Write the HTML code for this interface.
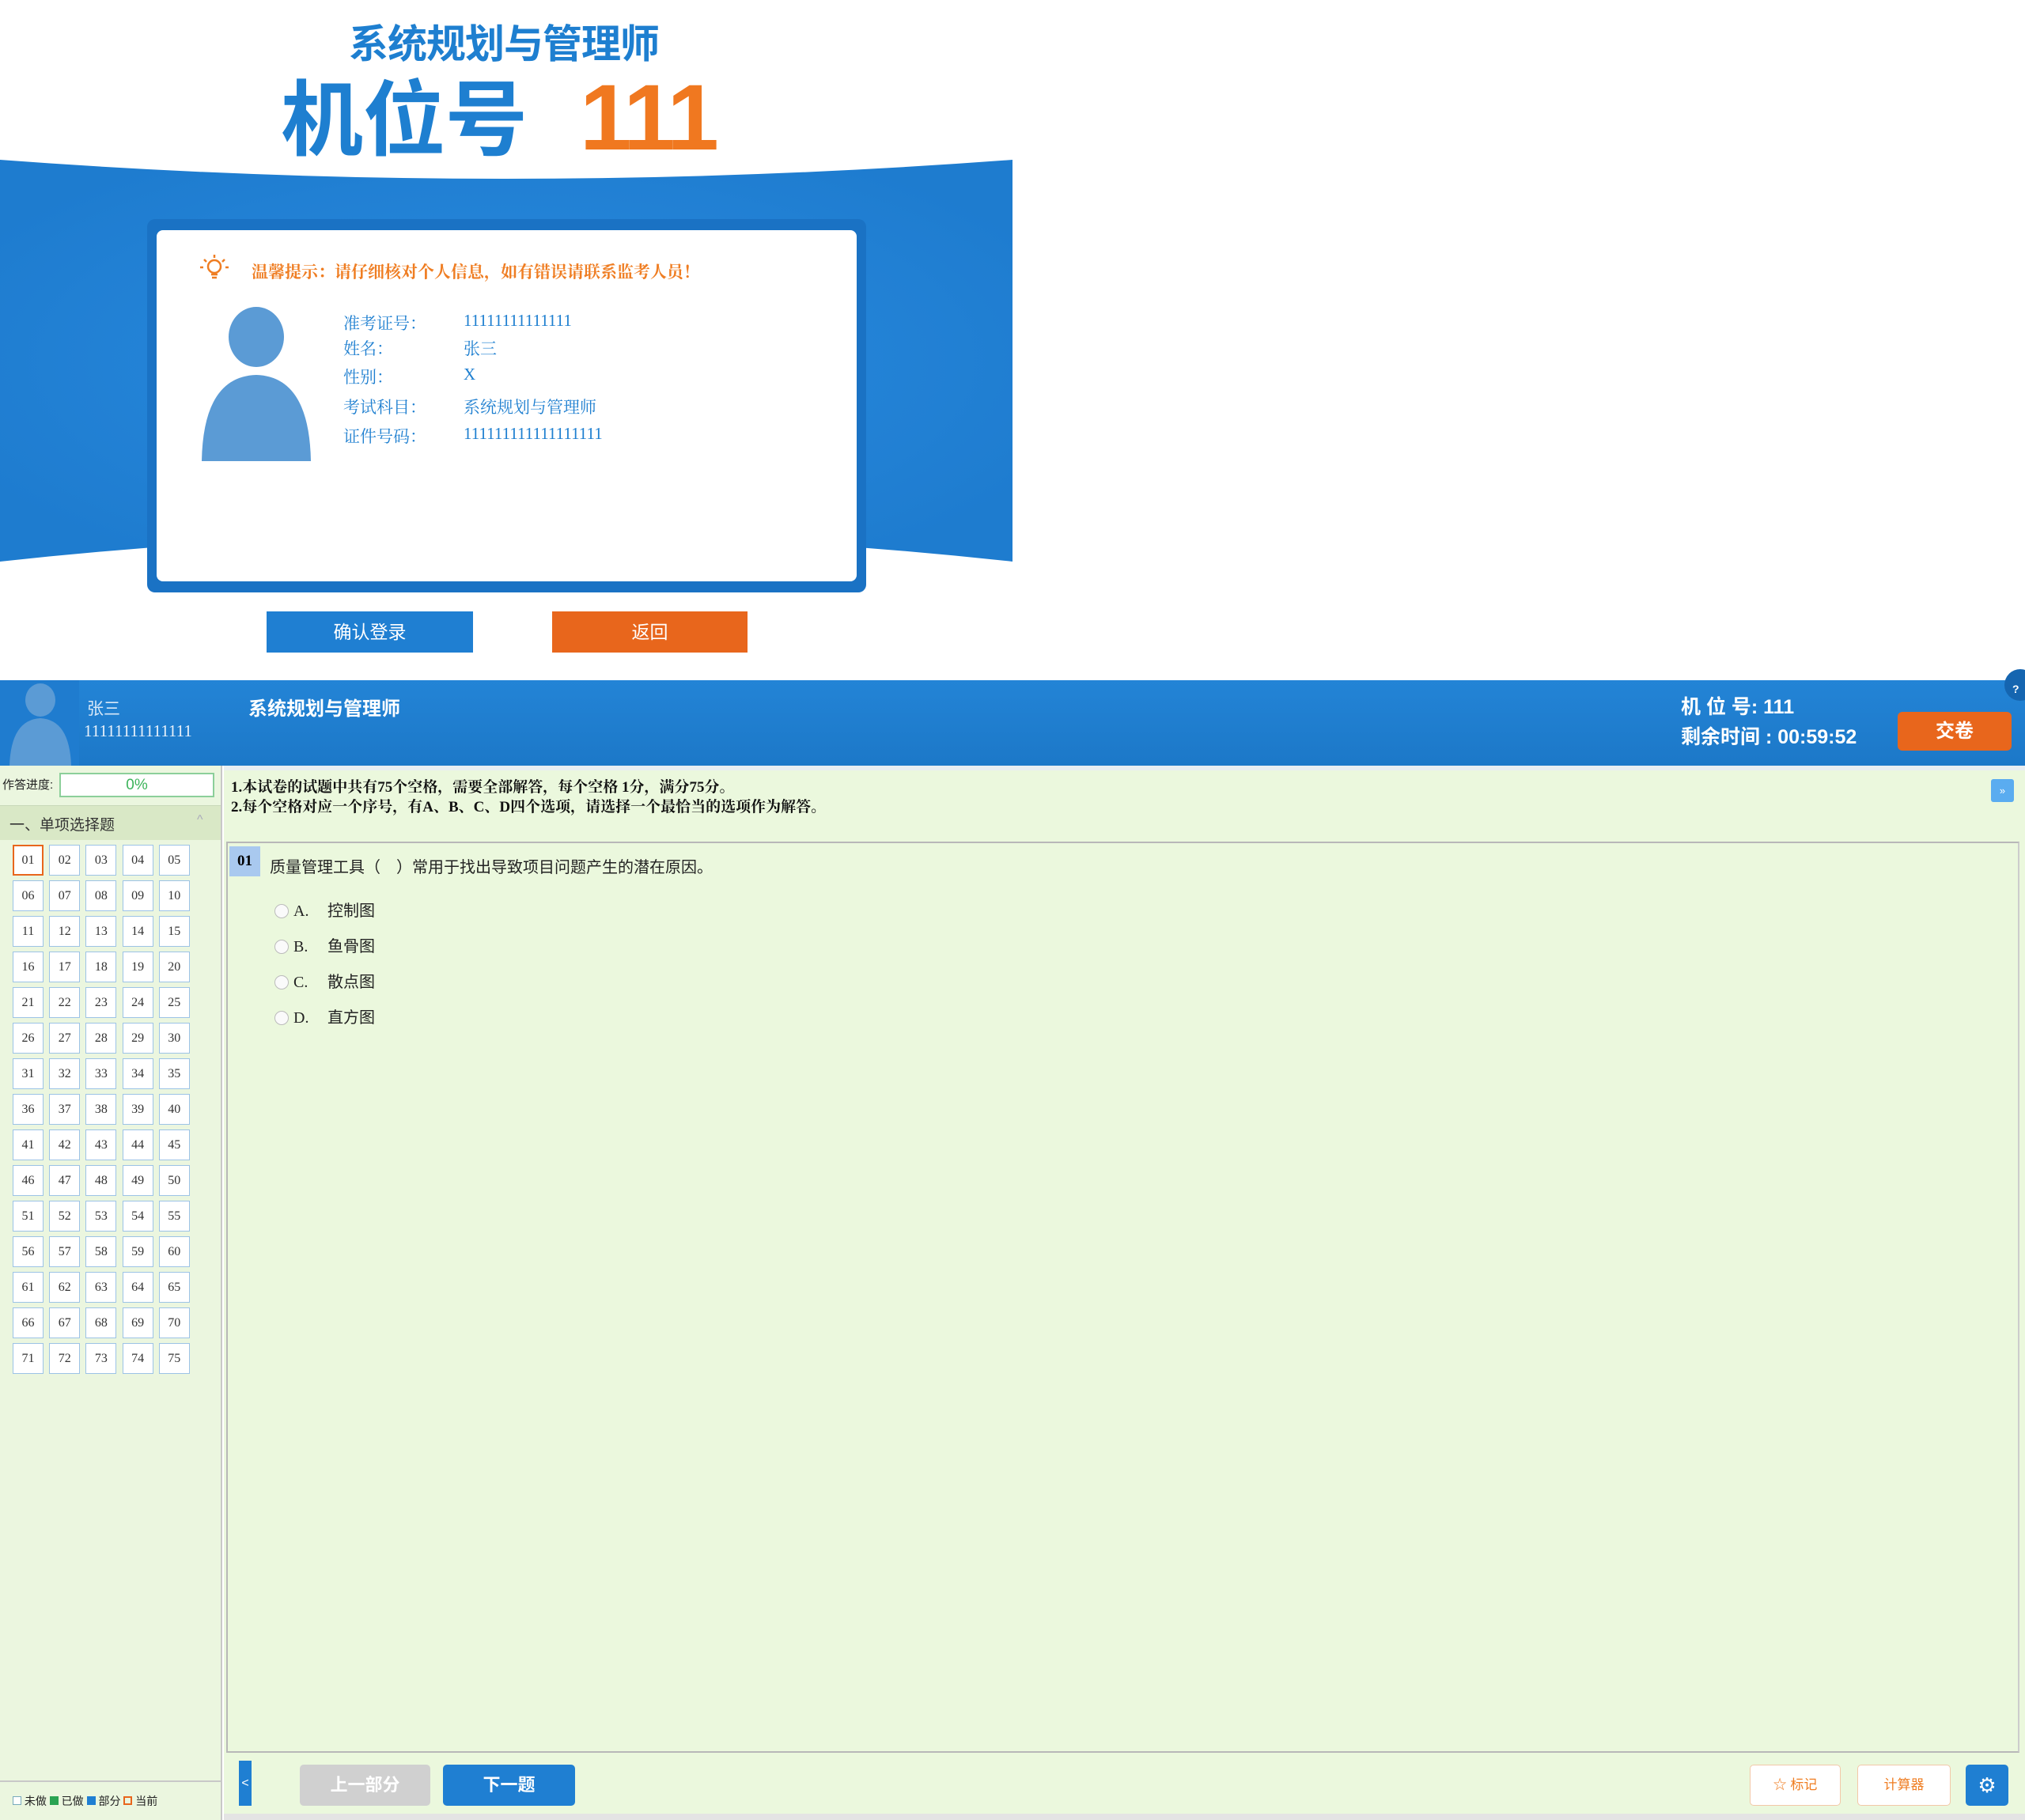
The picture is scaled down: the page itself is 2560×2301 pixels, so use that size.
<!DOCTYPE html>
<html><head><meta charset="utf-8">
<style>
*{margin:0;padding:0;box-sizing:border-box}
body{width:2560px;height:2301px;position:relative;background:#fff;overflow:hidden;font-family:"Liberation Sans","Noto Sans CJK SC",sans-serif}
.a{position:absolute}
.ser{font-family:"Liberation Serif","Noto Serif CJK SC",serif}
.lab{position:absolute;left:434px;font-size:21px;color:#1e7fd0}
.val{position:absolute;left:586px;font-size:21px;color:#1e7fd0}
#grid{position:absolute;left:16px;top:1068px;display:grid;grid-template-columns:repeat(5,39px);column-gap:7.2px;row-gap:6px}
#grid div{width:39px;height:39px;border:1px solid #9cc3e6;background:#fff;font-family:"Liberation Serif",serif;font-size:16px;color:#333;text-align:center;line-height:37px}
#grid div.cur{border:2px solid #e8661c;line-height:35px}
.opt{position:absolute;left:347px;font-size:20px;color:#222;height:24px;line-height:24px}
.opt i{position:absolute;left:0;top:3px;width:18px;height:18px;border:1px solid #bbb;border-radius:50%;background:#fafafa}
.opt b{position:absolute;left:24px;font-weight:normal;font-family:"Liberation Serif",serif}
.opt span{position:absolute;left:67px;white-space:nowrap}
</style></head><body>
<svg class="a" style="left:0;top:0" width="1280" height="760">
<defs><radialGradient id="g" cx="0.5" cy="0.5" r="0.6"><stop offset="0" stop-color="#2a8be0"/><stop offset="1" stop-color="#1e7ccf"/></radialGradient></defs>
<path d="M0 202 Q640 250 1280 202 L1280 710 Q640 640 0 710 Z" fill="url(#g)"/>
<rect x="186" y="277" width="909" height="472" rx="10" fill="#1a72c4"/>
<rect x="198" y="291" width="885" height="444" rx="8" fill="#fff"/>
</svg>
<div class="a" style="left:441px;top:16px;width:400px;font-size:50px;font-weight:bold;color:#1e7fd0;white-space:nowrap;letter-spacing:-1px">系统规划与管理师</div>
<div class="a" style="left:355px;top:88px;font-size:104px;font-weight:bold;color:#1e7fd0;white-space:nowrap;line-height:130px">机位号</div>
<div class="a" style="left:733px;top:84px;font-size:118px;font-weight:bold;color:#f07820;line-height:130px;letter-spacing:-4px;font-family:'Liberation Sans',sans-serif">111</div>
<svg class="a" style="left:250px;top:320px" width="42" height="40" viewBox="0 0 42 40"><g stroke="#ef7d22" stroke-width="2.5" fill="none"><circle cx="21" cy="17" r="8"/><path d="M17 27h8M18 31h6M21 2v4M8 8l3 3M34 8l-3 3M3 18h4M35 18h4"/></g></svg>
<div class="a ser" style="left:318px;top:328px;font-size:21px;color:#ef7d22;font-weight:bold;white-space:nowrap">温馨提示：请仔细核对个人信息，如有错误请联系监考人员！</div>
<svg class="a" style="left:253px;top:386px" width="142" height="200"><ellipse cx="71" cy="40" rx="35" ry="38" fill="#5b9bd5"/><path d="M2 197 Q4 90 71 88 Q138 90 140 197 Z" fill="#5b9bd5"/></svg>
<div class="lab ser" style="top:393px">准考证号：</div><div class="val ser" style="top:393px">11111111111111</div>
<div class="lab ser" style="top:425px">姓名：</div><div class="val ser" style="top:425px">张三</div>
<div class="lab ser" style="top:461px">性别：</div><div class="val ser" style="top:461px">X</div>
<div class="lab ser" style="top:499px">考试科目：</div><div class="val ser" style="top:499px">系统规划与管理师</div>
<div class="lab ser" style="top:536px">证件号码：</div><div class="val ser" style="top:536px">111111111111111111</div>
<div class="a" style="left:337px;top:773px;width:261px;height:52px;background:#1f7fd2;color:#fff;font-size:23px;text-align:center;line-height:52px">确认登录</div>
<div class="a" style="left:698px;top:773px;width:247px;height:52px;background:#e8661c;color:#fff;font-size:23px;text-align:center;line-height:52px">返回</div>

<div class="a" style="left:0;top:860px;width:2560px;height:108px;background:linear-gradient(#2384d6,#1c78c8)"></div>
<div class="a" style="left:0;top:860px;width:100px;height:108px;background:#1f7ccf"></div>
<svg class="a" style="left:8px;top:864px" width="86" height="104"><ellipse cx="43" cy="21" rx="19" ry="21" fill="#5b9bd5"/><path d="M4 104 Q6 46 43 44 Q80 46 82 104 Z" fill="#5b9bd5"/></svg>
<div class="a" style="left:110px;top:880px;font-size:21px;color:#d7e8f8">张三</div>
<div class="a ser" style="left:106px;top:912px;font-size:21px;color:#e6f0fa">11111111111111</div>
<div class="a" style="left:314px;top:876px;font-size:24px;font-weight:bold;color:#fff;white-space:nowrap">系统规划与管理师</div>
<div class="a" style="left:2125px;top:874px;font-size:25px;font-weight:bold;color:#fff;white-space:nowrap">机 位 号: 111</div>
<div class="a" style="left:2125px;top:912px;font-size:25px;font-weight:bold;color:#fff;white-space:nowrap">剩余时间 : 00:59:52</div>
<div class="a" style="left:2399px;top:900px;width:144px;height:49px;background:#e8661c;border-radius:6px;color:#fff;font-size:24px;font-weight:bold;text-align:center;line-height:49px">交卷</div>
<div class="a" style="left:2534px;top:846px;width:40px;height:40px;border-radius:50%;background:#1565b0;color:#fff;font-size:14px;font-weight:bold;padding:17px 0 0 10px">?</div>

<div class="a" style="left:0;top:968px;width:281px;height:1333px;background:#ebf6df;border-right:2px solid #c8c8c8"></div>
<div class="a" style="left:3px;top:981px;font-size:15px;color:#222">作答进度:</div>
<div class="a" style="left:75px;top:977px;width:196px;height:31px;border:2px solid #8ccf9a;background:#fff;color:#3cb35a;font-size:19px;text-align:center;line-height:27px">0%</div>
<div class="a" style="left:0;top:1018px;width:279px;height:44px;background:#d9e8c6;border-top:1px solid #c8d8b8"></div>
<div class="a" style="left:12px;top:1028px;font-size:19px;color:#333">一、单项选择题</div>
<div class="a" style="left:249px;top:1028px;font-size:16px;color:#aab">^</div>
<div id="grid">
<div class="cur">01</div><div>02</div><div>03</div><div>04</div><div>05</div><div>06</div><div>07</div><div>08</div><div>09</div><div>10</div><div>11</div><div>12</div><div>13</div><div>14</div><div>15</div><div>16</div><div>17</div><div>18</div><div>19</div><div>20</div><div>21</div><div>22</div><div>23</div><div>24</div><div>25</div><div>26</div><div>27</div><div>28</div><div>29</div><div>30</div><div>31</div><div>32</div><div>33</div><div>34</div><div>35</div><div>36</div><div>37</div><div>38</div><div>39</div><div>40</div><div>41</div><div>42</div><div>43</div><div>44</div><div>45</div><div>46</div><div>47</div><div>48</div><div>49</div><div>50</div><div>51</div><div>52</div><div>53</div><div>54</div><div>55</div><div>56</div><div>57</div><div>58</div><div>59</div><div>60</div><div>61</div><div>62</div><div>63</div><div>64</div><div>65</div><div>66</div><div>67</div><div>68</div><div>69</div><div>70</div><div>71</div><div>72</div><div>73</div><div>74</div><div>75</div>
</div>
<div class="a" style="left:0;top:2251px;width:279px;height:2px;background:#c8c8c8"></div>
<div class="a" style="left:16px;top:2268px;font-size:14px;color:#222;white-space:nowrap;line-height:18px">
<span style="display:inline-block;width:11px;height:11px;border:1px solid #7ab;background:#fff"></span> 未做 <span style="display:inline-block;width:11px;height:11px;background:#2aa352"></span> 已做 <span style="display:inline-block;width:11px;height:11px;background:#1f7fd2"></span> 部分 <span style="display:inline-block;width:11px;height:11px;border:2px solid #e8661c"></span> 当前</div>

<div class="a" style="left:283px;top:968px;width:2277px;height:1333px;background:#ebf8dd"></div>
<div class="a" style="left:283px;top:968px;width:2277px;height:6px;background:#e8eef2"></div>
<div class="a ser" style="left:292px;top:983px;font-size:19px;font-weight:bold;color:#111;white-space:nowrap;line-height:25px">1.本试卷的试题中共有75个空格，需要全部解答，每个空格 1分，满分75分。<br>2.每个空格对应一个序号，有A、B、C、D四个选项，请选择一个最恰当的选项作为解答。</div>
<div class="a" style="left:2517px;top:985px;width:29px;height:29px;background:#5aacf0;border-radius:3px;color:#fff;font-size:13px;text-align:center;line-height:29px">»</div>
<div class="a" style="left:286px;top:1064px;width:2267px;height:1152px;border:2px solid #b8b8b8;border-right-color:#ccc;background:#ebf8dd"></div>
<div class="a" style="left:290px;top:1070px;width:39px;height:38px;background:#a9c9ef;font-size:19px;font-weight:bold;text-align:center;line-height:38px;font-family:'Liberation Serif',serif">01</div>
<div class="a" style="left:341px;top:1080px;font-size:20px;color:#222;white-space:nowrap">质量管理工具（　）常用于找出导致项目问题产生的潜在原因。</div>
<div class="opt" style="top:1140px"><i></i><b>A.</b><span>控制图</span></div>
<div class="opt" style="top:1185px"><i></i><b>B.</b><span>鱼骨图</span></div>
<div class="opt" style="top:1230px"><i></i><b>C.</b><span>散点图</span></div>
<div class="opt" style="top:1275px"><i></i><b>D.</b><span>直方图</span></div>
<div class="a" style="left:302px;top:2226px;width:16px;height:57px;background:#1f7fd2;color:#fff;font-size:16px;line-height:57px;text-align:center">&lt;</div>
<div class="a" style="left:379px;top:2231px;width:165px;height:52px;background:#d0d0d0;border-radius:5px;color:#fff;font-size:22px;font-weight:bold;text-align:center;line-height:52px">上一部分</div>
<div class="a" style="left:560px;top:2231px;width:167px;height:52px;background:#1f7fd2;border-radius:5px;color:#fff;font-size:22px;font-weight:bold;text-align:center;line-height:52px">下一题</div>
<div class="a" style="left:2212px;top:2231px;width:115px;height:52px;background:#fff;border:1px solid #f3c8a8;border-radius:5px;color:#ef7d22;font-size:17px;text-align:center;line-height:50px">☆ 标记</div>
<div class="a" style="left:2348px;top:2231px;width:118px;height:52px;background:#fff;border:1px solid #f3c8a8;border-radius:5px;color:#ef7d22;font-size:17px;text-align:center;line-height:50px">计算器</div>
<div class="a" style="left:2485px;top:2231px;width:54px;height:52px;background:#1f7fd2;border-radius:5px;color:#fff;font-size:26px;text-align:center;line-height:52px">⚙</div>
<div class="a" style="left:283px;top:2293px;width:2277px;height:8px;background:#e4e4e4"></div>
</body></html>
